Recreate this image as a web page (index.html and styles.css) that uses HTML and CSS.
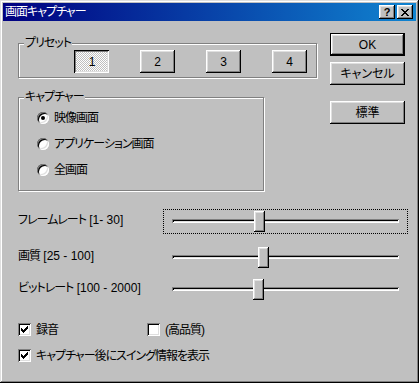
FILE: index.html
```html
<!DOCTYPE html>
<html lang="ja">
<head>
    <meta charset="UTF-8">
    <title>画面キャプチャー</title>
    <link rel="stylesheet" href="styles.css">
</head>
<body>
    <div class="window">
        <div class="titlebar">
            <span class="title">画面キャプチャー</span>
            <div class="cap_btns">
                <span class="cap_btn help">?</span>
                <span class="cap_btn">
                    <svg width="8" height="7" viewBox="0 0 8 7" shape-rendering="crispEdges"><path d="M0 0h2v1H0z M6 0h2v1H6z M1 1h2v1H1z M5 1h2v1H5z M2 2h4v1H2z M3 3h2v1H3z M2 4h4v1H2z M1 5h2v1H1z M5 5h2v1H5z M0 6h2v1H0z M6 6h2v1H6z" fill="#000"/></svg>
                </span>
            </div>
        </div>
        <div class="content">
            <div class="top">
                <div class="groups">
                    <fieldset class="group">
                        <legend>プリセット</legend>
                        <div class="preset_row">
                            <span class="btn small pressed">1</span>
                            <span class="btn small">2</span>
                            <span class="btn small">3</span>
                            <span class="btn small">4</span>
                        </div>
                    </fieldset>
                    <fieldset class="group capture">
                        <legend>キャプチャー</legend>
                        <div class="radio_list">
                            <div class="radio_row"><span class="radio on"></span>映像画面</div>
                            <div class="radio_row"><span class="radio"></span>アプリケーション画面</div>
                            <div class="radio_row"><span class="radio"></span>全画面</div>
                        </div>
                    </fieldset>
                </div>
                <div class="actions">
                    <span class="btn wide default">OK</span>
                    <span class="btn wide">キャンセル</span>
                    <span class="btn wide std">標準</span>
                </div>
            </div>
            <div class="sliders">
                <div class="slider_row">
                    <span class="slider_label">フレームレート<span class="num"> [1- 30]</span></span>
                    <div class="slider focus"><div class="track"></div><div class="thumb" style="left:90px"></div></div>
                </div>
                <div class="slider_row">
                    <span class="slider_label">画質<span class="num"> [25 - 100]</span></span>
                    <div class="slider"><div class="track"></div><div class="thumb" style="left:94px"></div></div>
                </div>
                <div class="slider_row last">
                    <span class="slider_label">ビットレート<span class="num"> [100 - 2000]</span></span>
                    <div class="slider"><div class="track"></div><div class="thumb" style="left:89px"></div></div>
                </div>
            </div>
            <div class="checks">
                <div class="check_row">
                    <div class="check_item first"><span class="check"><svg width="7" height="7" viewBox="0 0 7 7" shape-rendering="crispEdges"><path d="M0 2H1V3H2V4H3V3H4V2H5V1H6V0H7V3H6V4H5V5H4V6H3V7H2V6H1V5H0Z" fill="#000"/></svg></span>録音</div>
                    <div class="check_item"><span class="check"></span>(高品質)</div>
                </div>
                <div class="check_row">
                    <div class="check_item"><span class="check"><svg width="7" height="7" viewBox="0 0 7 7" shape-rendering="crispEdges"><path d="M0 2H1V3H2V4H3V3H4V2H5V1H6V0H7V3H6V4H5V5H4V6H3V7H2V6H1V5H0Z" fill="#000"/></svg></span>キャプチャー後にスイング情報を表示</div>
                </div>
            </div>
        </div>
    </div>
</body>
</html>
```

FILE: styles.css
```css
*{
    margin: 0;
    padding: 0;
    box-sizing: border-box;
}
body{
    background: #c0c0c0;
    color: #000;
    font: 12px/12px "Liberation Sans", "Noto Sans CJK JP", sans-serif;
    font-feature-settings: "palt";
    letter-spacing: -1px;
}
.num{
    letter-spacing: 0;
}
.window{
    width: 419px;
    height: 383px;
    padding: 3px;
    background: #c0c0c0;
    box-shadow: inset -1px -1px #000, inset 1px 1px #dfdfdf, inset -2px -2px #808080, inset 2px 2px #fff;
}
.titlebar{
    height: 18px;
    display: flex;
    align-items: center;
    justify-content: space-between;
    padding: 0 3px 0 2px;
    background: linear-gradient(to right, #000080, #1084d0);
    color: #fff;
}
.cap_btns{
    display: flex;
    gap: 2px;
}
.cap_btn{
    width: 16px;
    height: 14px;
    display: flex;
    align-items: center;
    justify-content: center;
    background: #c0c0c0;
    color: #000;
    letter-spacing: 0;
    box-shadow: inset -1px -1px #000, inset 1px 1px #fff, inset -2px -2px #808080, inset 2px 2px #dfdfdf;
}
.cap_btn.help{
    font: bold 11px/11px "Liberation Sans", sans-serif;
}

/* buttons */
.btn{
    display: flex;
    align-items: center;
    justify-content: center;
    height: 23px;
    letter-spacing: 0;
    background: #c0c0c0;
    box-shadow: inset -1px -1px #000, inset 1px 1px #fff, inset -2px -2px #808080, inset 2px 2px #dfdfdf;
}
.btn.small{
    width: 35px;
}
.btn.wide{
    width: 75px;
}
.btn.default{
    border: 1px solid #000;
}
.btn.pressed{
    padding: 1px 0 0 1px;
    background: repeating-conic-gradient(#fff 0 25%, #c0c0c0 0 50%) 0 0 / 2px 2px;
    box-shadow: inset 1px 1px #000, inset -1px -1px #fff, inset 2px 2px #808080, inset -2px -2px #dfdfdf;
}

/* layout */
.content{
    padding-left: 15px;
}
.top{
    display: flex;
    align-items: flex-start;
}
.groups{
    width: 299px;
    margin-top: 16px;
}
.actions{
    margin: 12px 0 0 13px;
    display: flex;
    flex-direction: column;
}
.actions .btn + .btn{
    margin-top: 6px;
}
.actions .btn.std{
    margin-top: 16px;
}

/* group boxes */
.group{
    border: 1px solid #808080;
    box-shadow: inset 1px 1px #fff, 1px 1px #fff;
    padding: 0;
}
.group legend{
    margin-left: 5px;
    padding: 0 1px;
    background: #c0c0c0;
    line-height: 12px;
}
.group.capture{
    width: 246px;
    margin-top: 13px;
}
.preset_row{
    display: flex;
    gap: 31px;
    padding: 1px 0 4px 55px;
}
.radio_list{
    padding: 2px 0 7px 18px;
}
.radio_row{
    height: 26px;
    display: flex;
    align-items: center;
    gap: 5px;
}
.radio{
    position: relative;
    width: 12px;
    height: 12px;
    border-radius: 50%;
    background: #fff;
    box-shadow: inset 1px 1px #808080, inset -1px -1px #fff, inset 2px 2px #000, inset -2px -2px #dfdfdf;
}
.radio.on::after{
    content: "";
    position: absolute;
    left: 4px;
    top: 4px;
    width: 4px;
    height: 4px;
    border-radius: 50%;
    background: #000;
}

/* sliders */
.sliders{
    margin-top: 18px;
}
.slider_row{
    display: flex;
    align-items: center;
    height: 25px;
}
.slider_row + .slider_row{
    margin-top: 11px;
}
.slider_row.last{
    margin-top: 7px;
}
.slider_label{
    width: 145px;
    margin-bottom: 4px;
}
.slider{
    position: relative;
    width: 245px;
    height: 25px;
    border: 1px solid transparent;
}
.slider.focus{
    border: 1px dotted #000;
}
.track{
    width: 227px;
    height: 4px;
    margin: 9px 0 0 8px;
    box-shadow: inset 1px 1px #808080, inset -1px -1px #fff, inset 2px 2px #000, inset -2px -2px #dfdfdf;
}
.thumb{
    position: absolute;
    top: 1px;
    width: 11px;
    height: 21px;
    background: #c0c0c0;
    box-shadow: inset -1px -1px #000, inset 1px 1px #fff, inset -2px -2px #808080, inset 2px 2px #dfdfdf;
}

/* checkboxes */
.checks{
    margin-top: 21px;
}
.check_row{
    display: flex;
    height: 13px;
    align-items: center;
}
.check_row + .check_row{
    margin-top: 13px;
}
.check_item{
    display: flex;
    align-items: center;
    gap: 5px;
}
.check_item.first{
    width: 129px;
}
.check{
    width: 13px;
    height: 13px;
    padding: 3px;
    display: flex;
    background: #fff;
    box-shadow: inset 1px 1px #808080, inset -1px -1px #fff, inset 2px 2px #000, inset -2px -2px #dfdfdf;
}
```
